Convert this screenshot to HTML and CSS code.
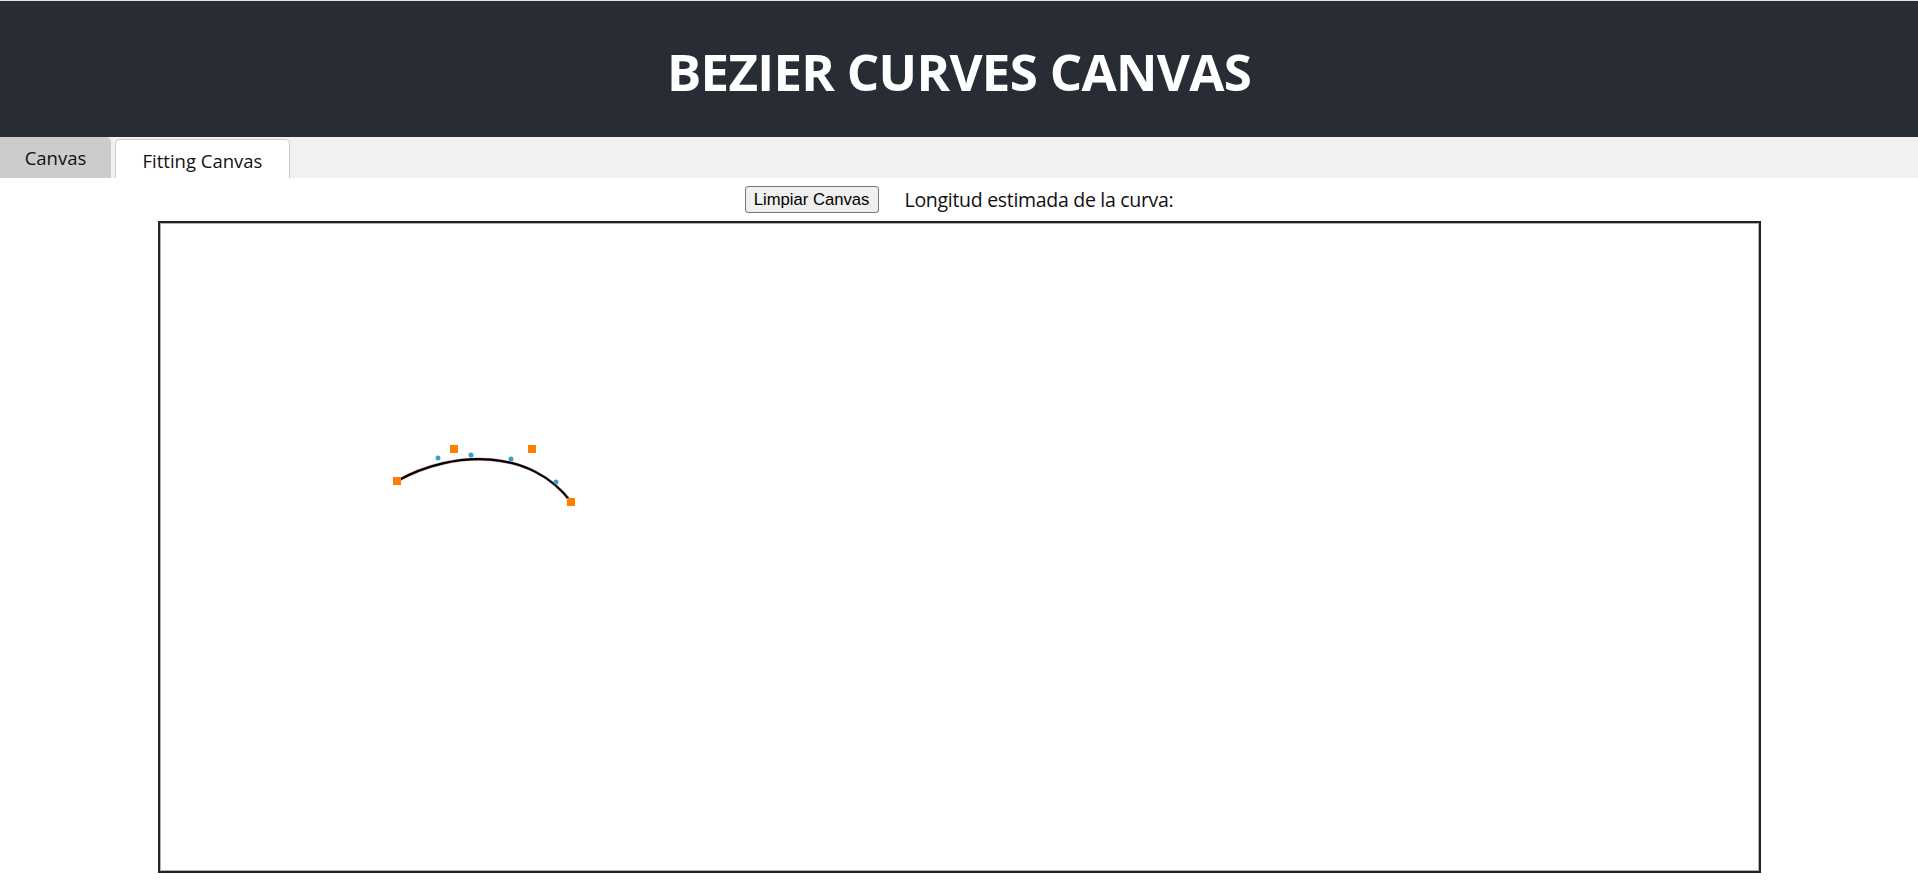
FILE: index.html
```html
<!DOCTYPE html>
<html lang="es">
<head>
<meta charset="utf-8">
<title>Bezier Curves Canvas</title>
<link rel="stylesheet" href="styles.css">
</head>
<body>
<header class="header">
  <h1 class="title">BEZIER CURVES CANVAS</h1>
</header>
<nav class="tabs">
  <button class="tab">Canvas</button>
  <button class="tab tab-active">Fitting Canvas</button>
</nav>
<main class="content">
  <div class="toolbar">
    <button class="clear-btn">Limpiar Canvas</button>
    <span class="length-label">Longitud estimada de la curva:</span>
    <span class="length-value"></span>
  </div>
  <div class="board">
    <svg class="board-svg" width="1599" height="648" viewBox="0 0 1599 648">
      <path d="M237 258 C294 226 372 226 411 279" fill="none" stroke="#8a2020" stroke-width="3.2" stroke-opacity="0.4"/>
      <path d="M237 258 C294 226 372 226 411 279" fill="none" stroke="#000" stroke-width="2.2"/>
      <g fill="#3a9fcf">
        <circle cx="278" cy="235" r="2.5"/>
        <circle cx="311" cy="232" r="2.5"/>
        <circle cx="351" cy="236" r="2.5"/>
        <circle cx="396" cy="259" r="2.5"/>
      </g>
      <g fill="#ff8000">
        <rect x="233" y="254" width="8" height="8"/>
        <rect x="290" y="222" width="8" height="8"/>
        <rect x="368" y="222" width="8" height="8"/>
        <rect x="407" y="275" width="8" height="8"/>
      </g>
    </svg>
  </div>
</main>
</body>
</html>
```
FILE: styles.css
```css
html, body {
  margin: 0;
  padding: 0;
  background: #fff;
}
body {
  font-family: "Open Sans", "Noto Sans", sans-serif;
  border-top: 1px solid #e6e6e6;
}
.header {
  background: #282c35;
  height: 136px;
  display: flex;
  align-items: center;
  justify-content: center;
}
.title {
  margin: 0;
  padding-top: 3px;
  color: #fff;
  font-family: "Open Sans", sans-serif;
  font-weight: 700;
  font-size: 51px;
  letter-spacing: -0.7px;
}
.tabs {
  background: #f1f1f1;
  height: 41px;
  display: flex;
  align-items: flex-end;
  gap: 4px;
}
.tab {
  font-family: "Open Sans", sans-serif;
  font-size: 18.5px;
  color: #111;
  border: none;
  background: #ccc;
  height: 41px;
  width: 111px;
  padding: 0;
  border-radius: 0 5px 0 0;
  cursor: pointer;
}
.tab-active {
  background: #fff;
  height: 39px;
  width: 175px;
  border: 1px solid #ccc;
  border-bottom: none;
  border-radius: 5px 5px 0 0;
  padding-top: 3px;
}
.content {
  display: flex;
  flex-direction: column;
  align-items: center;
}
.toolbar {
  height: 43px;
  display: flex;
  align-items: center;
  gap: 26px;
}
.clear-btn {
  font-family: "Liberation Sans", Arial, sans-serif;
  font-size: 16.67px;
  height: 27px;
  width: 134px;
  padding: 0;
  background: #efefef;
  border: 1px solid #767676;
  border-radius: 3px;
  color: #000;
}
.length-label {
  font-family: "Open Sans", sans-serif;
  font-size: 19.5px;
  color: #111;
  letter-spacing: -0.3px;
}
.length-value {
  width: 0;
  margin-left: -26px;
}
.board {
  border: 2px solid #222;
  box-shadow: inset 0 0 0 1px #b0b0b0;
  width: 1599px;
  height: 648px;
}
.board-svg {
  display: block;
}
```
